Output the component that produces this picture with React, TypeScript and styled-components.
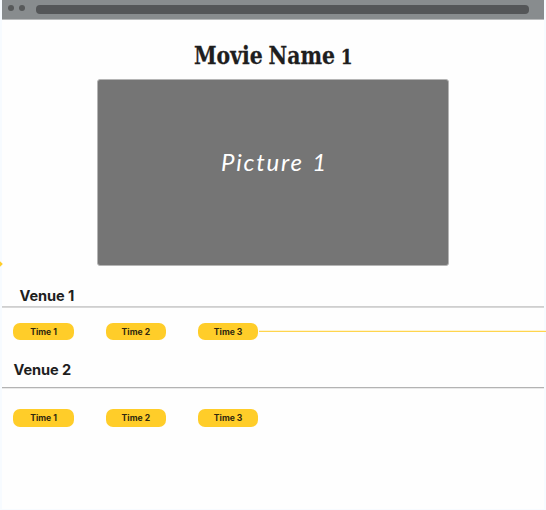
import React from "react";
import styled, { createGlobalStyle } from "styled-components";

const GlobalStyle = createGlobalStyle`
  * { box-sizing: border-box; }
  body { margin: 0; background: #f7fbff; overflow: hidden; }
`;

const Canvas = styled.div`
  position: relative;
  width: 546px;
  height: 510px;
  padding: 0 2px 1px;
  overflow: hidden;
  background: #f7fbff;
  font-family: Inter, "Liberation Sans", sans-serif;
  color: #1e1e1e;
`;

const Window = styled.main`
  display: flex;
  flex-direction: column;
  width: 542px;
  height: 509px;
  background: #fefefe;
`;

const BrowserBar = styled.header`
  display: flex;
  flex: none;
  height: 20px;
  padding: 5px 15.5px 0 5.5px;
  background: #888c8e;
  border-bottom: 1px solid #b9bbbc;
`;

const Dot = styled.i`
  width: 6px;
  height: 6px;
  margin-right: 5.5px;
  border-radius: 50%;
  background: #57595a;
`;

const AddressBar = styled.div`
  flex: 1;
  height: 9px;
  margin-left: 5.5px;
  border-radius: 4px;
  background: #545658;
`;

const Title = styled.h1`
  display: flex;
  align-items: baseline;
  justify-content: center;
  flex: none;
  height: 59px;
  margin: 0;
  padding-top: 21px;
  font: 700 24px/30px "DejaVu Serif", serif;
  white-space: pre;
`;

const TitleText = styled.span`
  flex: none;
  word-spacing: -1.5px;
  -webkit-text-stroke: 0.3px currentColor;
  transform: scaleX(0.85);
`;

const Numeral = styled.span`
  font-size: 20px;
`;

const Picture = styled.section`
  display: flex;
  flex: none;
  justify-content: center;
  width: 352px;
  height: 187px;
  margin-left: 95px;
  padding-top: 66px;
  border: 1px solid #b5b5b5;
  border-radius: 3px;
  background: #757575;
`;

const PictureLabel = styled.span`
  padding-left: 3px;
  color: #fff;
  font: italic 400 24px/32px Lato, sans-serif;
  letter-spacing: 1.8px;
  word-spacing: 1px;
  white-space: nowrap;
`;

const Venue = styled.h2<{ $inset: number; $top: number; $height: number }>`
  flex: none;
  height: ${(p) => p.$height}px;
  margin: 0;
  padding: ${(p) => p.$top}px 0 0 ${(p) => p.$inset}px;
  font-size: 14.6px;
  font-weight: 650;
  line-height: 18px;
  letter-spacing: -0.08px;
`;

const Rule = styled.hr<{ $strong?: boolean }>`
  flex: none;
  width: 100%;
  height: 2px;
  margin: 0;
  border: 0;
  border-top: 1px solid ${(p) => (p.$strong ? "#b3b3b3" : "#cfcfcf")};
  background: ${(p) => (p.$strong ? "#e9e9e9" : "#d8d8d8")};
`;

const Times = styled.div<{ $top: number }>`
  display: flex;
  flex: none;
  align-items: center;
  gap: 32px;
  margin-top: ${(p) => p.$top}px;
  padding-left: 11.4px;
`;

const Time = styled.button`
  flex: none;
  width: 60.3px;
  height: 17.5px;
  padding: 1px 0 0;
  border: 0;
  border-radius: 7px;
  background: #ffcd29;
  color: #30280f;
  font: 650 8.6px/16.5px Inter, sans-serif;
`;

const Connector = styled.i`
  position: absolute;
  left: 259px;
  top: 330px;
  width: 287px;
  height: 2px;
  border-bottom: 1px solid #ffd54e;
  background: #fff4d0;
`;

const Anchor = styled.i`
  position: absolute;
  left: -2px;
  top: 262.3px;
  width: 4px;
  height: 4px;
  background: #ffcd29;
  transform: rotate(45deg);
`;

const times = ["Time 1", "Time 2", "Time 3"];

export default function App() {
  return (
    <Canvas>
      <GlobalStyle />
      <Window>
        <BrowserBar>
          <Dot />
          <Dot />
          <AddressBar />
        </BrowserBar>
        <Title>
          <TitleText>Movie Name <Numeral>1</Numeral></TitleText>
        </Title>
        <Picture>
          <PictureLabel>Picture 1</PictureLabel>
        </Picture>
        <Venue $inset={17.5} $top={21} $height={40}>Venue 1</Venue>
        <Rule />
        <Times $top={14.5}>
          {times.map((t) => <Time key={t}>{t}</Time>)}
        </Times>
        <Venue $inset={11.5} $top={21} $height={46.5}>Venue 2</Venue>
        <Rule $strong />
        <Times $top={20.5}>
          {times.map((t) => <Time key={t}>{t}</Time>)}
        </Times>
      </Window>
      <Connector />
      <Anchor />
    </Canvas>
  );
}
